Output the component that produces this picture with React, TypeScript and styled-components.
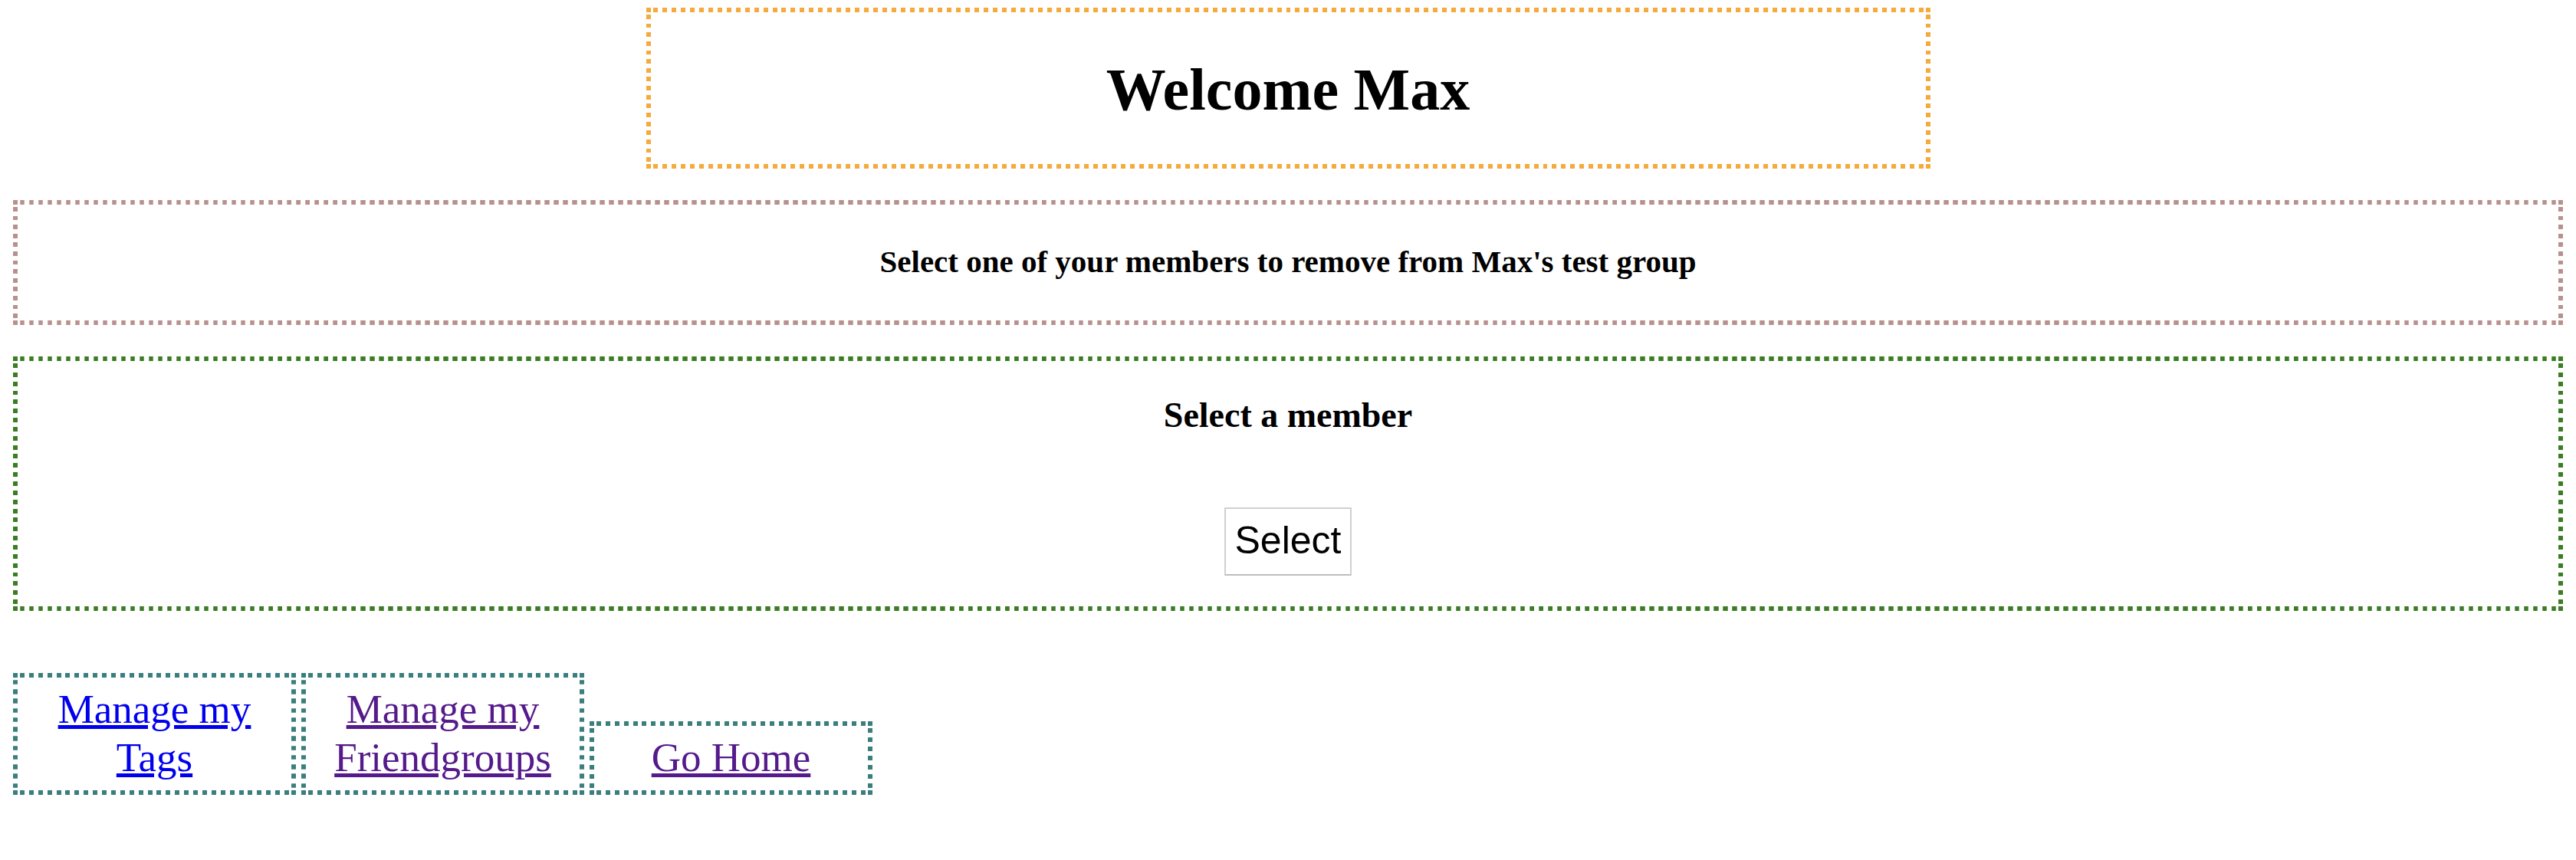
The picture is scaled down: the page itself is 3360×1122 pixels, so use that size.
import React from "react";
import styled, { createGlobalStyle, css } from "styled-components";

const GlobalStyle = createGlobalStyle`
  html, body {
    margin: 0;
    padding: 0;
    background: #ffffff;
  }
  body {
    font-family: "Liberation Serif", "Times New Roman", serif;
    color: #000000;
  }
`;

/* Square-dot border (6px squares, 12px period) like the reference's dotted frames */
const dotSvg = (color: string) =>
  `url("data:image/svg+xml,${encodeURIComponent(
    `<svg xmlns='http://www.w3.org/2000/svg' width='24' height='24'><g fill='${color}'>` +
      `<rect x='0' y='0' width='6' height='6'/><rect x='18' y='0' width='6' height='6'/>` +
      `<rect x='0' y='18' width='6' height='6'/><rect x='18' y='18' width='6' height='6'/>` +
      `<rect x='9' y='0' width='6' height='6'/><rect x='9' y='18' width='6' height='6'/>` +
      `<rect x='0' y='9' width='6' height='6'/><rect x='18' y='9' width='6' height='6'/>` +
      `</g></svg>`
  )}")`;

const dotted = (color: string) => css`
  border: 6px dotted ${color};
  border-image-source: ${dotSvg(color)};
  border-image-slice: 6;
  border-image-width: 6px;
  border-image-repeat: round;
`;

const Page = styled.div`
  padding: 10px 17px 0;
`;

const Banner = styled.header`
  width: 50%;
  margin: 0 auto;
  ${dotted("#f4aa3c")}
  padding: 56px 0 52px;
  text-align: center;
`;

const Title = styled.h1`
  margin: 0;
  font-size: 78px;
  line-height: 1.149;
  font-weight: bold;
`;

const Panel = styled.section<{ $color: string; $pad: string }>`
  margin-top: 41px;
  ${(p) => dotted(p.$color)}
  padding: ${(p) => p.$pad};
  display: flex;
  flex-direction: column;
  align-items: center;
  text-align: center;
`;

const Subtitle = styled.h4`
  margin: 0;
  font-size: 41px;
  line-height: 1.149;
  font-weight: bold;
`;

const SectionHeading = styled.h3`
  margin: 0;
  font-size: 46px;
  line-height: 1.149;
  font-weight: bold;
`;

const SelectButton = styled.button`
  margin-top: 93px;
  box-sizing: border-box;
  height: 89px;
  padding: 0 12px;
  display: inline-flex;
  align-items: center;
  justify-content: center;
  background: #ffffff;
  border: 2px solid #d0d0d0;
  border-bottom-color: #bdbdbd;
  border-radius: 0;
  font-family: "Liberation Sans", Arial, sans-serif;
  font-size: 50px;
  line-height: 1.149;
  color: #000000;
  cursor: pointer;
`;

const NavRow = styled.nav`
  margin-top: 81px;
  display: flex;
  align-items: last baseline;
  gap: 7px;
`;

const NavBox = styled.div`
  width: 357px;
  ${dotted("#3a7f7d")}
  padding: 10.5px 0;
  text-align: center;
  font-size: 53px;
  line-height: 63px;
`;

const NavLink = styled.a<{ $visited?: boolean }>`
  color: ${(p) => (p.$visited ? "#551a8b" : "#0000ee")};
  text-decoration: underline;
`;

const links = [
  { label: "Manage my Tags", visited: false },
  { label: "Manage my Friendgroups", visited: true },
  { label: "Go Home", visited: true },
];

export default function App() {
  return (
    <>
      <GlobalStyle />
      <Page>
        <Banner>
          <Title>Welcome Max</Title>
        </Banner>
        <Panel $color="#b8918f" $pad="51px 0 53px">
          <Subtitle>Select one of your members to remove from Max's test group</Subtitle>
        </Panel>
        <Panel $color="#3b7d23" $pad="45px 0 40px">
          <SectionHeading>Select a member</SectionHeading>
          <SelectButton type="button">Select</SelectButton>
        </Panel>
        <NavRow>
          {links.map((l) => (
            <NavBox key={l.label}>
              <NavLink href="#" $visited={l.visited}>
                {l.label}
              </NavLink>
            </NavBox>
          ))}
        </NavRow>
      </Page>
    </>
  );
}
